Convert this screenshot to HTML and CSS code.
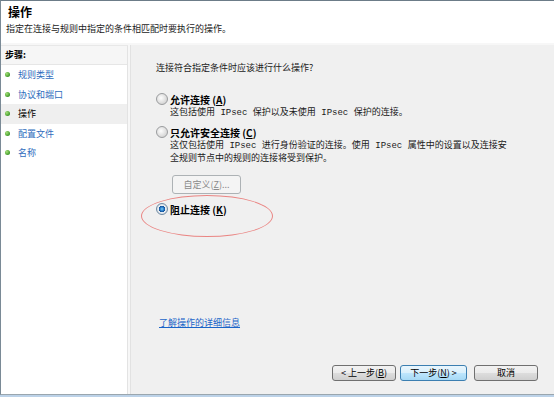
FILE: index.html
```html
<!DOCTYPE html>
<html lang="zh-CN">
<head>
  <meta charset="UTF-8" />
  <title>操作</title>
  <link rel="stylesheet" href="styles.css">
</head>
<body>
  <div class="window">
    <div class="header">
      <h1>操作</h1>
      <p>指定在连接与规则中指定的条件相匹配时要执行的操作。</p>
    </div>
    <div class="sep"></div>

    <div class="main">
      <!-- Steps list -->
      <div class="steps">
        <div class="steps-title">步骤:</div>
        <ul>
          <li><span class="dot"></span><a>规则类型</a></li>
          <li><span class="dot"></span><a>协议和端口</a></li>
          <li class="current"><span class="dot"></span><a>操作</a></li>
          <li><span class="dot"></span><a>配置文件</a></li>
          <li><span class="dot"></span><a>名称</a></li>
        </ul>
      </div>

      <!-- Page content -->
      <div class="panel">
        <p class="question">连接符合指定条件时应该进行什么操作?</p>

        <div class="option first">
          <span class="radio"></span>
          <span class="label">允许连接 (<u>A</u>)</span>
        </div>
        <p class="desc">这包括使用<span class="mono"> IPsec </span>保护以及未使用<span class="mono"> IPsec </span>保护的连接。</p>

        <div class="option second">
          <span class="radio"></span>
          <span class="label">只允许安全连接 (<u>C</u>)</span>
        </div>
        <p class="desc">这仅包括使用<span class="mono"> IPsec </span>进行身份验证的连接。使用<span class="mono"> IPsec </span>属性中的设置以及连接安<br>全规则节点中的规则的连接将受到保护。</p>

        <button class="custom" disabled>自定义(<u>Z</u>)...</button>

        <div class="option third">
          <span class="radio checked"></span>
          <span class="label">阻止连接 (<u>K</u>)</span>
          <span class="mark"></span>
        </div>

        <div class="footer">
          <a class="more">了解操作的详细信息</a>
          <div class="buttons">
            <button class="btn back">&lt; 上一步(<u>B</u>)</button>
            <button class="btn next">下一步(<u>N</u>) &gt;</button>
            <button class="btn cancel">取消</button>
          </div>
        </div>
      </div>
    </div>
  </div>
</body>
</html>
```

FILE: styles.css
```css
* {
  box-sizing: border-box;
}
body {
  margin: 0;
  width: 554px;
  height: 397px;
  overflow: hidden;
  background: #bcd2e8;
  font-family: "Noto Sans CJK SC", "Liberation Sans", sans-serif;
  font-size: 9px;
  color: #1a1a1a;
}
.window {
  height: 395px;
  display: flex;
  flex-direction: column;
  border-top: 1px solid #6c7c88;
  border-left: 1px solid #7a8a96;
  border-bottom: 1px solid #9aa6ae;
}
.header {
  height: 42px;
  background: #fff;
  padding: 4px 0 0 5px;
}
.header h1 {
  margin: 0 0 0 2px;
  font-size: 12px;
  line-height: 14px;
  font-weight: bold;
  color: #000;
}
.header p {
  margin: 4px 0 0;
  line-height: 12px;
}
.sep {
  height: 2px;
  background: #f7f7f7;
}
.main {
  flex: 1;
  display: flex;
  background: #f7f7f7;
}
.steps {
  width: 127px;
  margin-right: 2px;
  background: #fff;
  border-top: 1px solid #e8e8e8;
  border-right: 1px solid #e3e3e3;
}
.steps-title {
  height: 19px;
  line-height: 18px;
  padding-left: 4px;
  font-weight: bold;
  color: #000;
  background: #f6f6f6;
  border-bottom: 1px solid #e6e6e6;
}
.steps ul {
  list-style: none;
  margin: 0;
  padding: 0;
}
.steps li {
  height: 19.5px;
  display: flex;
  align-items: center;
  padding-left: 4px;
}
.steps li a {
  color: #2e6cbd;
}
.steps li.current {
  background: #efefef;
}
.steps li.current a {
  color: #000;
}
.dot {
  width: 5px;
  height: 5px;
  border-radius: 50%;
  margin-right: 8px;
  background: radial-gradient(circle at 35% 35%, #a6e07a, #3f9a28 70%);
}
.panel {
  flex: 1;
  display: flex;
  flex-direction: column;
  align-items: flex-start;
  background: #f0f0f0;
  border-left: 1px solid #e2e2e2;
  padding: 17px 16px 13px 25px;
}
.question {
  margin: 0;
  line-height: 12px;
}
.option {
  position: relative;
  display: flex;
  align-items: center;
  height: 12px;
}
.option.first {
  margin-top: 19px;
}
.option.second {
  margin-top: 7px;
}
.option.third {
  margin-top: 9px;
}
.label {
  font-size: 10px;
  font-weight: bold;
  color: #000;
}
.radio {
  width: 12px;
  height: 12px;
  margin-right: 2px;
  border-radius: 50%;
  border: 1px solid #9a9c9e;
  background: radial-gradient(circle at 40% 40%, #fdfdfd, #d4d4d4 75%);
}
.radio.checked {
  border-color: #6f8aa3;
  background: radial-gradient(circle, #7fd0f6 0, #1c6fc1 2.2px, #164f93 3px, #e9eef3 3.5px, #c8ced4 100%);
}
.desc {
  margin: 1px 0 0 14px;
  line-height: 11px;
}
.mono {
  font-family: "Liberation Mono", monospace;
  font-size: 9px;
}
.custom {
  margin: 12px 0 0 16px;
  width: 69px;
  height: 19px;
  padding: 0;
  font-family: inherit;
  font-size: 9px;
  color: #8a8a8a;
  background: #f4f4f4;
  border: 1px solid #adb2b5;
  border-radius: 3px;
}
.mark {
  position: absolute;
  left: -15px;
  top: -8px;
  width: 132px;
  height: 42px;
  border: 1.2px solid #ea8583;
  border-radius: 50%;
}
.footer {
  margin-top: auto;
  align-self: stretch;
  display: flex;
  flex-direction: column;
  align-items: flex-start;
}
.more {
  margin-left: 3px;
  line-height: 12px;
  color: #1a64c8;
  text-decoration: underline;
}
.buttons {
  align-self: flex-end;
  display: flex;
  margin-top: 36px;
}
.btn {
  height: 16px;
  width: 64px;
  padding: 0;
  font-family: inherit;
  font-size: 9px;
  line-height: 14px;
  color: #000;
  border: 1px solid #707070;
  border-radius: 3px;
  background: linear-gradient(#f2f2f2 0, #ebebeb 50%, #dddddd 51%, #cfcfcf 100%);
}
.btn.next {
  width: 67px;
  margin-left: 4px;
  border-color: #3c7fb1;
  background: linear-gradient(#eaf6fd 0, #d9f0fc 50%, #bee6fd 51%, #a7d9f5 100%);
}
.btn.cancel {
  margin-left: 7px;
}
```
